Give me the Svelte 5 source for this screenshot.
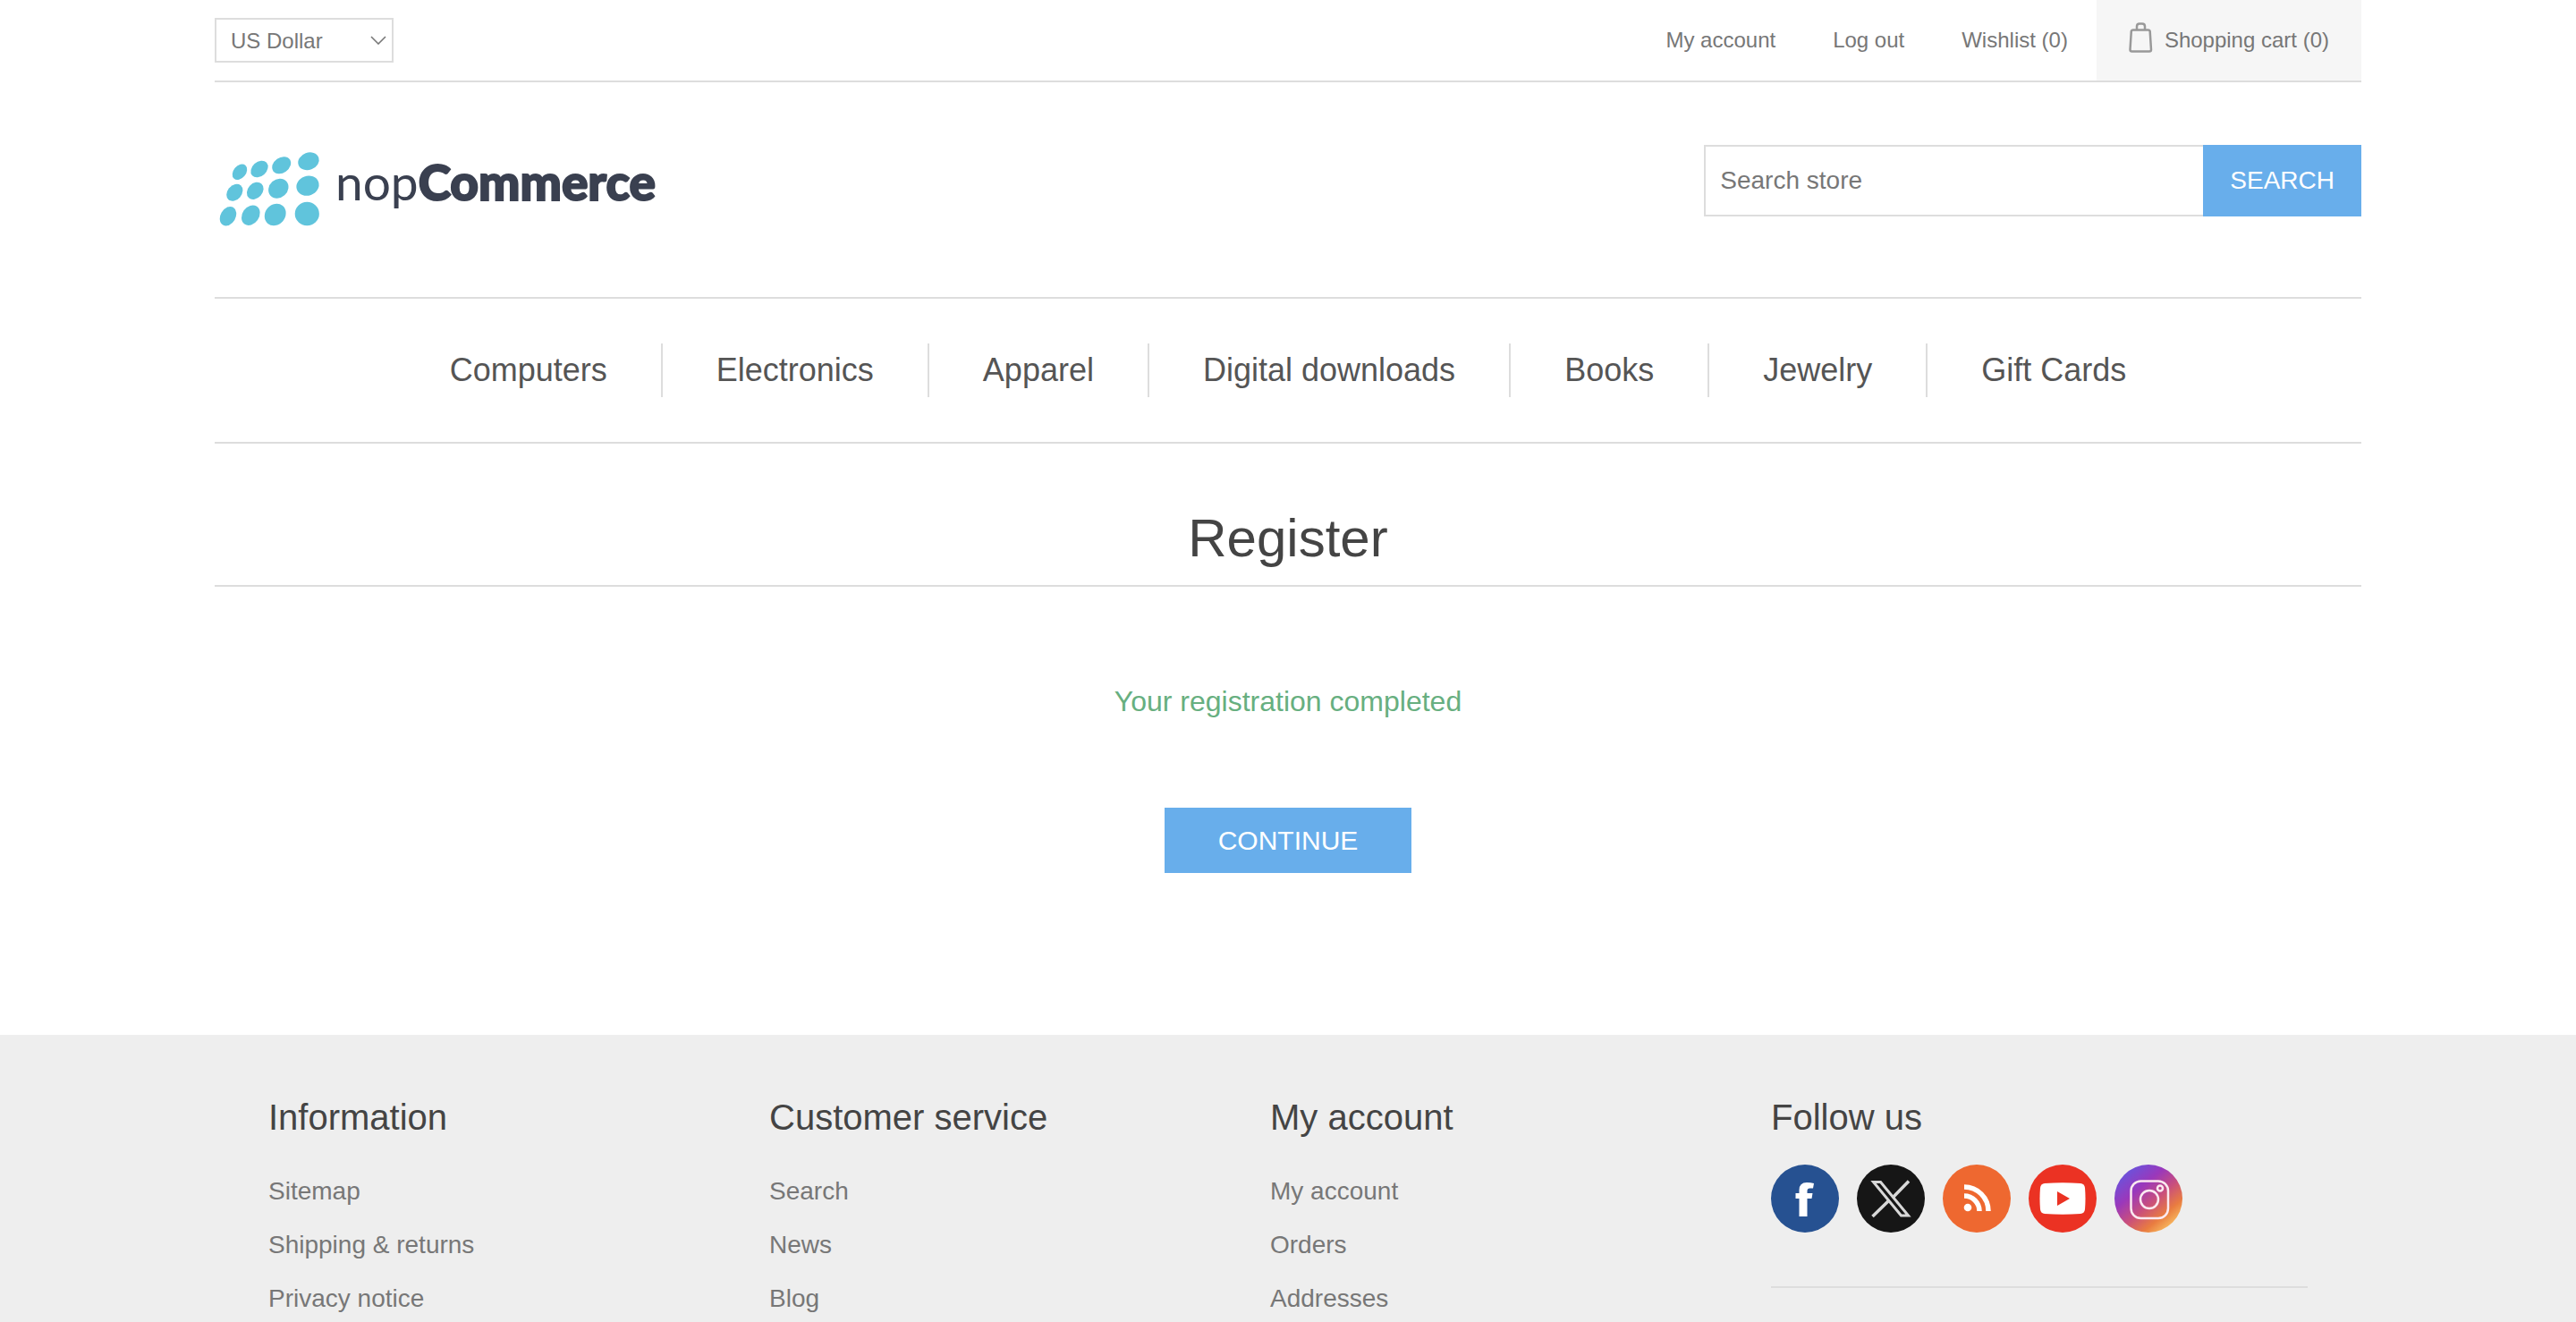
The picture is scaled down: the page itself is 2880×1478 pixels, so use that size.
<script>
  const account = ['My account', 'Log out', 'Wishlist (0)'];
  const menu = ['Computers', 'Electronics', 'Apparel', 'Digital downloads', 'Books', 'Jewelry', 'Gift Cards'];
  const columns = [
    { title: 'Information', links: ['Sitemap', 'Shipping & returns', 'Privacy notice'] },
    { title: 'Customer service', links: ['Search', 'News', 'Blog'] },
    { title: 'My account', links: ['My account', 'Orders', 'Addresses'] }
  ];
  // Ellipses of the logo mark: centre x, centre y, long radius, short radius, tilt in degrees
  const dots = [
    [28, 30.3, 9.8, 6.9, -50], [50, 27, 10.8, 8, -42], [74.7, 22.7, 11.3, 8.6, -35], [105, 18.3, 12, 9.6, -20],
    [22.3, 53.3, 10.5, 7.9, -50], [45.3, 51.3, 10.6, 8.2, -48], [71.3, 48.7, 12, 10.2, -42], [104, 45.7, 12.8, 10.9, -20],
    [15, 79.7, 11.4, 8.4, -60], [40.3, 78.7, 12, 9.4, -55], [67.7, 78, 12.9, 11.2, -50], [103.3, 77, 13.6, 13.2, 0]
  ];
</script>

<div class="page">
  <header class="wrap">
    <div class="upper">
      <select aria-label="Currency">
        <option>US Dollar</option>
      </select>
      <nav class="account" aria-label="Account">
        {#each account as item}
          <a href="#account">{item}</a>
        {/each}
        <a class="cart" href="#cart">
          <svg viewBox="0 0 28 36" width="28" height="36" fill="none" stroke="#999" stroke-width="2.500" aria-hidden="true">
            <path d="M4.500 8.500h17.500q1.500 0 1.700 1.500l1.300 20.500q0 2-2 2H3.500q-2 0-2-2L2.800 10q.2-1.500 1.700-1.500z" />
            <path d="M9 8V4.500q0-3 3-3h3q3 0 3 3V8" />
          </svg>
          <span>Shopping cart (0)</span>
        </a>
      </nav>
    </div>

    <div class="lower">
      <a class="logo" href="#home" aria-label="nopCommerce">
        <svg viewBox="0 0 500 100" width="500" height="100">
          {#each dots as [x, y, rx, ry, tilt]}
            <ellipse cx={x} cy={y} {rx} {ry} transform="rotate({tilt} {x} {y})" fill="#60c4dc" />
          {/each}
          <text x="135" y="62" class="logo-text">nop<tspan class="logo-bold">Commerce</tspan></text>
        </svg>
      </a>
      <form class="search" onsubmit={(e) => e.preventDefault()}>
        <input type="text" placeholder="Search store" aria-label="Search store" />
        <button type="submit">SEARCH</button>
      </form>
    </div>

    <nav class="menu" aria-label="Categories">
      {#each menu as item}
        <a href="#category">{item}</a>
      {/each}
    </nav>
  </header>

  <main class="wrap">
    <h1>Register</h1>
    <p class="result">Your registration completed</p>
    <button class="continue" type="button">CONTINUE</button>
  </main>

  <footer>
    <div class="wrap columns">
      {#each columns as col}
        <section>
          <h2>{col.title}</h2>
          <ul>
            {#each col.links as link}
              <li><a href="#info">{link}</a></li>
            {/each}
          </ul>
        </section>
      {/each}
      <section>
        <h2>Follow us</h2>
        <div class="social">
          <a href="#facebook" aria-label="Facebook">
            <svg viewBox="0 0 76 76">
              <circle cx="38" cy="38" r="38" fill="#265191" />
              <path d="M31.500 58V38h-4v-6h4v-3.500q0-8.500 8.500-8.500 4.500 0 8 1l-1 5.500h-3.500q-3 0-3 3V32h6l-1 6h-5v20z" fill="#fff" />
            </svg>
          </a>
          <a href="#x" aria-label="X">
            <svg viewBox="0 0 76 76">
              <circle cx="38" cy="38" r="38" fill="#161616" />
              <g fill="none" stroke="#d8d8d8" stroke-width="3">
                <path d="M18.500 19.500h8L57.500 57h-8z" />
                <path d="M58 18.500L40.500 36.500M36 40L17.500 58" stroke-width="3.500" />
              </g>
            </svg>
          </a>
          <a href="#rss" aria-label="RSS">
            <svg viewBox="0 0 76 76">
              <circle cx="38" cy="38" r="38" fill="#ee6830" />
              <circle cx="28" cy="48" r="4.300" fill="#fff" />
              <g fill="none" stroke="#fff" stroke-width="5.500">
                <path d="M24 35a17 17 0 0 1 17 17" />
                <path d="M24 25a27 27 0 0 1 27 27" />
              </g>
            </svg>
          </a>
          <a href="#youtube" aria-label="YouTube">
            <svg viewBox="0 0 76 76">
              <circle cx="38" cy="38" r="38" fill="#eb3223" />
              <path d="M18 21q20-1.500 40 0 4.500.500 5 5 1 12 0 24-.500 4.500-5 5-20 1.500-40 0-4.500-.500-5-5-1-12 0-24 .500-4.500 5-5z" fill="#fff" />
              <path d="M32 30v16l14-8z" fill="#eb3223" />
            </svg>
          </a>
          <a href="#instagram" aria-label="Instagram">
            <svg viewBox="0 0 76 76">
              <defs>
                <linearGradient id="insta" x1="0.150" y1="0.100" x2="0.850" y2="0.950">
                  <stop offset="0" stop-color="#6a53dc" />
                  <stop offset="0.300" stop-color="#9a38bb" />
                  <stop offset="0.550" stop-color="#c94f7c" />
                  <stop offset="0.780" stop-color="#e97c40" />
                  <stop offset="1" stop-color="#fbc766" />
                </linearGradient>
              </defs>
              <circle cx="38" cy="38" r="38" fill="url(#insta)" />
              <g fill="none" stroke="#fbe9f0" stroke-width="2.500">
                <rect x="18.500" y="18.500" width="41.500" height="41.500" rx="11" />
                <circle cx="39" cy="39" r="10" />
                <circle cx="51" cy="26.500" r="3" />
              </g>
            </svg>
          </a>
        </div>
      </section>
    </div>
  </footer>
</div>

<style>
  :global(body) {
    margin: 0;
    background: #fff;
  }
  .page {
    display: flex;
    flex-direction: column;
    min-height: 100vh;
    font-family: 'Liberation Sans', Arial, sans-serif;
    font-size: 28px;
    color: #777;
  }
  .page * {
    box-sizing: border-box;
  }
  a {
    color: inherit;
    text-decoration: none;
  }
  svg {
    display: block;
  }
  input,
  button,
  select {
    margin: 0;
    border-radius: 0;
    font-family: inherit;
  }
  .wrap {
    width: calc(100% - 80px);
    max-width: 2400px;
    margin: 0 auto;
  }
  .upper {
    display: flex;
    justify-content: space-between;
    align-items: center;
    border-bottom: 2px solid #ddd;
    font-size: 24px;
    line-height: 90px;
  }
  select {
    width: 200px;
    height: 50px;
    padding: 0 16px;
    border: 2px solid #ddd;
    appearance: none;
    background: #fff url("data:image/svg+xml,%3Csvg xmlns='http://www.w3.org/2000/svg' width='18' height='10' fill='none' stroke='%23777' stroke-width='1.6'%3E%3Cpath d='M1 1l8 8 8-8'/%3E%3C/svg%3E") no-repeat right 6px center;
    color: #777;
    font-size: 24px;
  }
  .account {
    display: flex;
  }
  .account a {
    padding: 0 32px;
  }
  .account .cart {
    display: flex;
    align-items: center;
    gap: 12px;
    padding: 0 36px;
    background: #f6f6f6;
  }
  .cart svg {
    margin-bottom: 4px;
  }
  .lower {
    display: flex;
    justify-content: space-between;
    align-items: flex-start;
    padding: 70px 0;
  }
  .logo-text {
    font: 400 55px Lato, sans-serif;
    fill: #3a4050;
  }
  .logo-bold {
    font-weight: 900;
    stroke: #3a4050;
    stroke-width: 2px;
  }
  .search {
    display: flex;
  }
  .search input {
    width: 558px;
    height: 80px;
    padding: 0 16px;
    border: 2px solid #ddd;
    border-right: 0;
    color: #777;
    font-size: 28px;
  }
  .search input::placeholder {
    color: #777;
    opacity: 1;
  }
  .search button {
    padding: 0 30px;
    border: 0;
    background: #68aeeb;
    color: #fff;
    font-size: 28px;
  }
  .menu {
    display: flex;
    justify-content: center;
    padding: 50px 0;
    border-top: 2px solid #ddd;
    border-bottom: 2px solid #ddd;
    color: #555;
    font-size: 36px;
    line-height: 60px;
  }
  .menu a {
    padding: 0 60px;
  }
  .menu a + a {
    border-left: 2px solid #ddd;
  }
  main {
    display: flex;
    flex-direction: column;
    align-items: center;
    padding: 72px 0 181px;
  }
  h1 {
    align-self: stretch;
    margin: 0;
    padding-bottom: 18px;
    border-bottom: 2px solid #ddd;
    color: #444;
    font-size: 60px;
    font-weight: 400;
    line-height: 68px;
    text-align: center;
  }
  .result {
    margin: 110px 0 101px;
    color: #67af80;
    font-size: 32px;
    line-height: 36px;
  }
  .continue {
    padding: 20px 60px;
    border: 0;
    background: #68aeeb;
    color: #fff;
    font-size: 30px;
    line-height: 33px;
  }
  footer {
    flex: 1;
    padding: 70px 0 8px;
    background: #eee;
  }
  .columns {
    display: grid;
    grid-template-columns: 560fr 560fr 560fr 600fr;
    padding: 0 60px;
  }
  h2 {
    margin: 0;
    color: #444;
    font-size: 40px;
    font-weight: 400;
    line-height: 44px;
  }
  ul {
    display: flex;
    flex-direction: column;
    gap: 24px;
    margin: 43px 0 0;
    padding: 0;
    list-style: none;
    line-height: 36px;
  }
  .social {
    display: flex;
    gap: 20px;
    margin-top: 31px;
    padding-bottom: 60px;
    border-bottom: 2px solid #ddd;
  }
  .social a,
  .social svg {
    width: 76px;
    height: 76px;
  }
</style>
